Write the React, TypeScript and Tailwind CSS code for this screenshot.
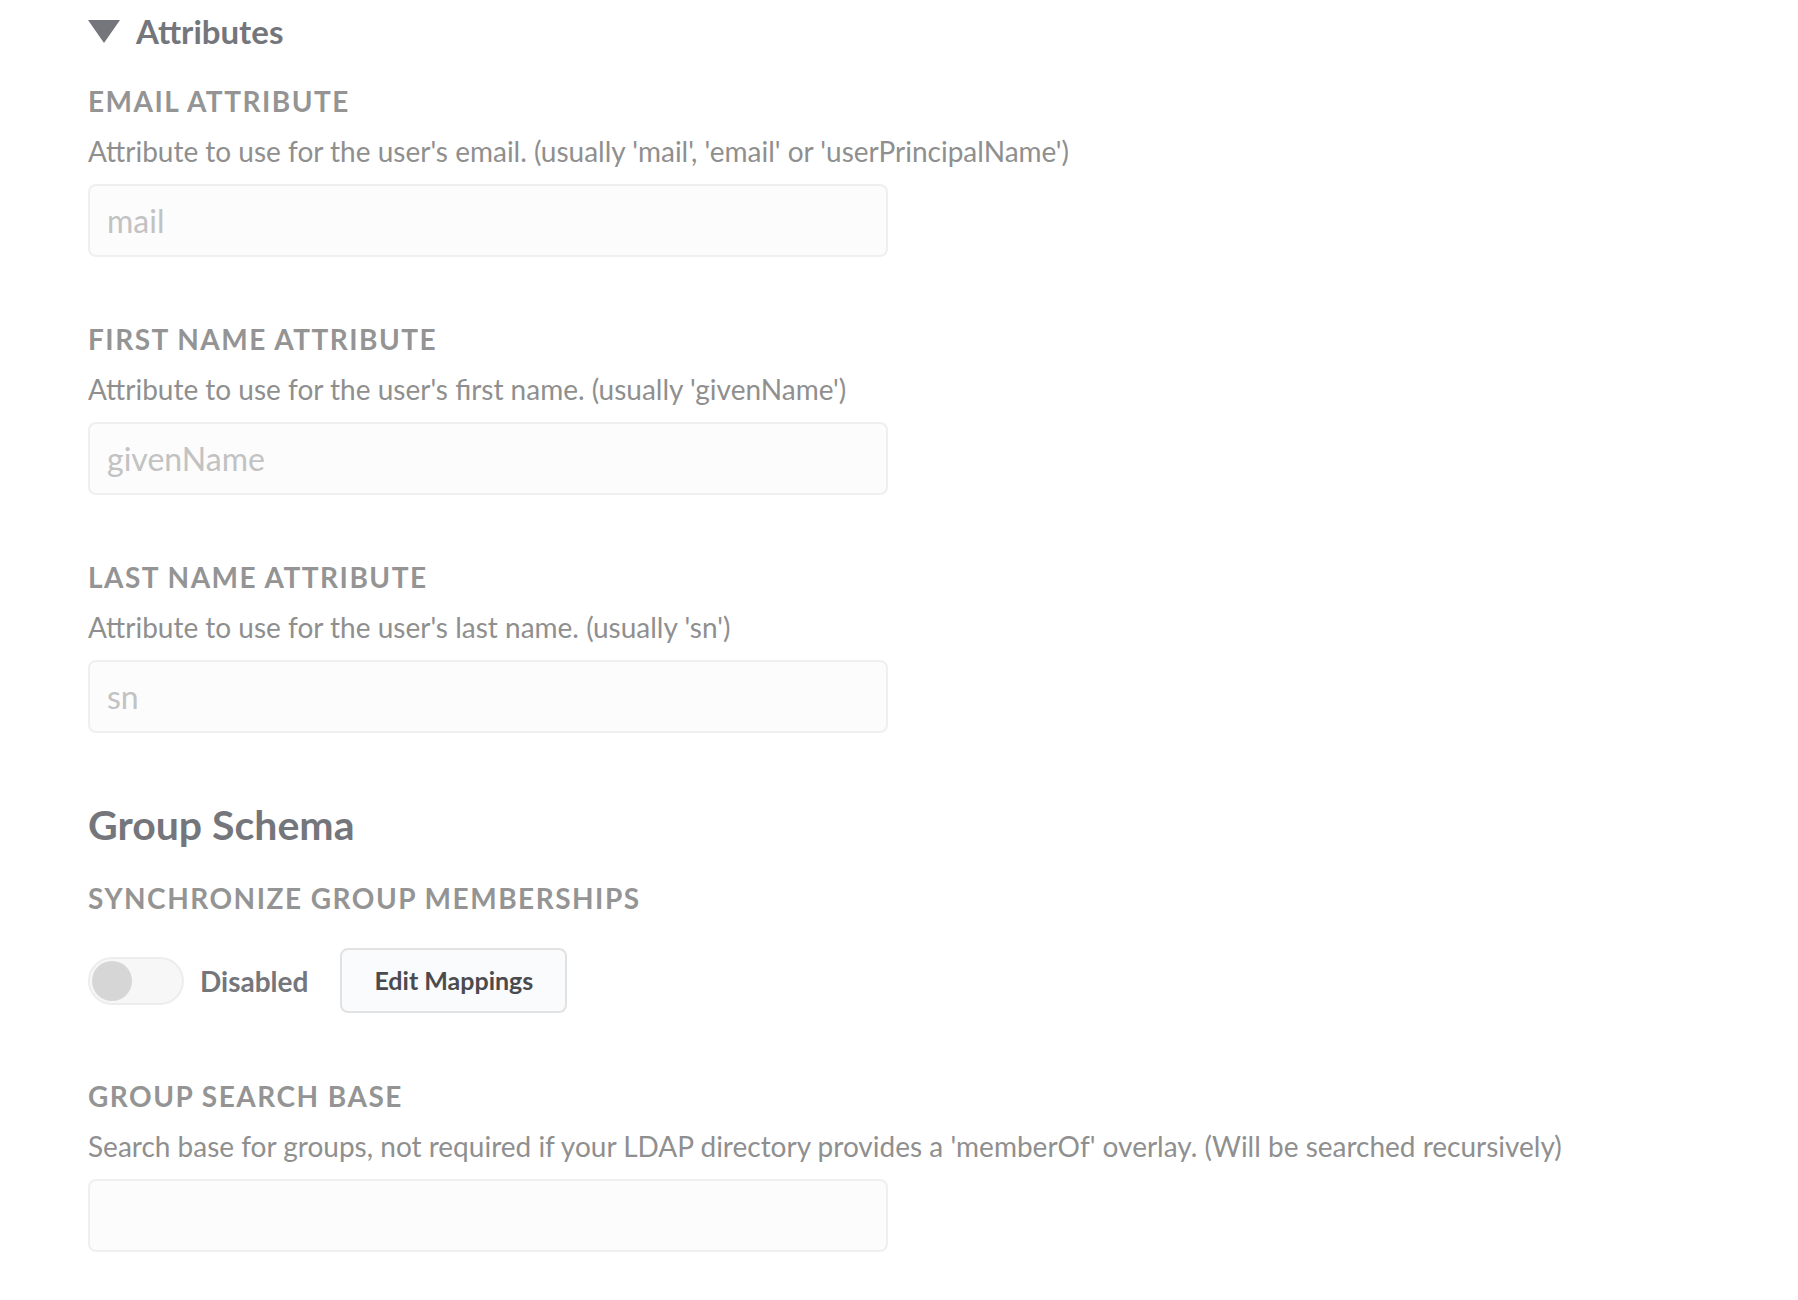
import React from 'react'

const fields = [
  {
    label: 'Email attribute',
    description: "Attribute to use for the user's email. (usually 'mail', 'email' or 'userPrincipalName')",
    placeholder: 'mail',
  },
  {
    label: 'First name attribute',
    description: "Attribute to use for the user's first name. (usually 'givenName')",
    placeholder: 'givenName',
  },
  {
    label: 'Last name attribute',
    description: "Attribute to use for the user's last name. (usually 'sn')",
    placeholder: 'sn',
  },
]

function Label({ children }: { children: React.ReactNode }) {
  return (
    <div className="text-[28px] leading-none font-bold uppercase tracking-[1.5px] text-[#949494]">
      {children}
    </div>
  )
}

function Field({ label, description, placeholder }: { label: string; description: string; placeholder: string }) {
  return (
    <div className="flex flex-col">
      <Label>{label}</Label>
      <p className="mt-[22px] text-[28px] leading-none text-[#8f8f8f]">{description}</p>
      <input
        className="mt-[19px] h-[73px] w-[800px] rounded-[8px] border-2 border-[#efefef] bg-[#fcfcfc] px-[17px] text-[32px] text-[#4b4b4f] placeholder:text-[#c2c2c2] outline-none"
        placeholder={placeholder}
      />
    </div>
  )
}

export default function App() {
  return (
    <div className="min-h-screen bg-white pl-[88px] pt-[15px] font-['Lato','Liberation_Sans',sans-serif]">
      <div className="flex items-center gap-[16px]">
        <svg width="32" height="23" viewBox="0 0 32 23">
          <polygon points="0,0 32,0 16,23" fill="#74767c" />
        </svg>
        <span className="text-[33px] leading-none font-bold text-[#74767c]">Attributes</span>
      </div>

      <div className="mt-[39px] flex flex-col gap-[68px]">
        {fields.map(f => (
          <Field key={f.label} {...f} />
        ))}
      </div>

      <h2 className="mt-[71px] text-[41px] leading-none font-bold text-[#74767c]">Group Schema</h2>

      <div className="mt-[39px]">
        <Label>Synchronize group memberships</Label>
      </div>

      <div className="mt-[36px] flex h-[65px] items-center">
        <div className="flex h-[48px] w-[96px] items-center rounded-full border-2 border-[#ededed] bg-[#f7f7f7] px-[2px]">
          <div className="h-[40px] w-[40px] rounded-full bg-[#d6d6d6]" />
        </div>
        <span className="ml-[16px] text-[28px] leading-none font-bold text-[#74767c]">Disabled</span>
        <button className="ml-[32px] h-[65px] w-[227px] rounded-[8px] border-2 border-[#e2e2e2] bg-[#fafbfc] text-[25px] leading-none font-bold text-[#4b4b4f]">
          Edit Mappings
        </button>
      </div>

      <div className="mt-[69px] pb-[60px]">
        <Field
          label="Group search base"
          description="Search base for groups, not required if your LDAP directory provides a 'memberOf' overlay. (Will be searched recursively)"
          placeholder=""
        />
      </div>
    </div>
  )
}
